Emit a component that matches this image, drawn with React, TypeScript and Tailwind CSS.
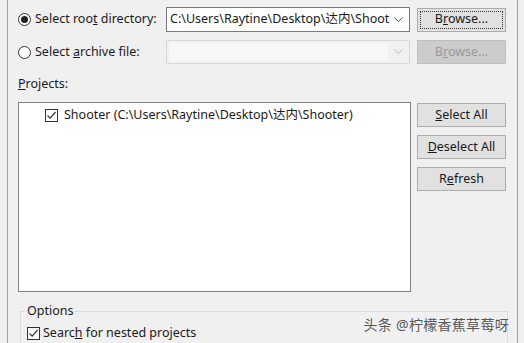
import React from 'react';

const font = { fontFamily: '"Noto Sans", "Noto Sans CJK SC", sans-serif' };

const Radio = ({ checked }: { checked?: boolean }) => (
  <span className="w-[13px] h-[13px] rounded-full border border-[#333] bg-white flex items-center justify-center shrink-0">
    {checked && <span className="w-[7px] h-[7px] rounded-full bg-[#222]" />}
  </span>
);

const Check = () => (
  <span className="w-[13px] h-[13px] border border-[#333] bg-white flex items-center justify-center shrink-0">
    <svg width="11" height="11" viewBox="0 0 11 11">
      <path d="M1.5 5.5 L4.2 8.2 L9.5 2" fill="none" stroke="#333" strokeWidth="1.2" />
    </svg>
  </span>
);

const Chevron = ({ color }: { color: string }) => (
  <svg width="9" height="6" viewBox="0 0 9 6">
    <path d="M0.5 0.5 L4.5 4.5 L8.5 0.5" fill="none" stroke={color} strokeWidth="1" />
  </svg>
);

const Btn = ({ children, focused, disabled }: { children: React.ReactNode; focused?: boolean; disabled?: boolean }) => (
  <div
    className={
      'w-[89px] h-[24px] flex items-center justify-center border ' +
      (disabled ? 'bg-[#cccccc] border-[#bfbfbf] text-[#9a9a9a]' : 'bg-[#e1e1e1] border-[#adadad] text-[#1a1a1a]')
    }
  >
    {focused ? (
      <div className="w-[83px] h-[18px] border border-dotted border-[#333] flex items-center justify-center">{children}</div>
    ) : (
      children
    )}
  </div>
);

export default function App() {
  return (
    <div className="w-[524px] h-[343px] overflow-hidden bg-[#f0f0f0] pl-[7px] text-[12.5px] text-[#1a1a1a]" style={font}>
      <div className="w-[511px] h-full border-x border-[#a0a0a0] pl-[10px] pt-[7px]">
        {/* root directory row */}
        <div className="flex items-center h-[25px]">
          <div className="w-[148px] flex items-center gap-[4px]">
            <Radio checked />
            <span className="whitespace-nowrap">Select roo<u>t</u> directory:</span>
          </div>
          <div className="w-[244px] h-[25px] border border-[#7a7a7a] bg-white flex items-center pl-[3px] pr-[6px]">
            <span className="flex-1 overflow-hidden whitespace-nowrap">C:\Users\Raytine\Desktop\达内\Shooter</span>
            <span className="pl-[4px]"><Chevron color="#555" /></span>
          </div>
          <div className="ml-[7px]">
            <Btn focused>
              <span>B<u>r</u>owse...</span>
            </Btn>
          </div>
        </div>
        {/* archive row */}
        <div className="flex items-center h-[24px] mt-[8px]">
          <div className="w-[148px] flex items-center gap-[4px]">
            <Radio />
            <span className="whitespace-nowrap">Select <u>a</u>rchive file:</span>
          </div>
          <div className="w-[244px] h-[24px] border border-[#d9d9d9] bg-[#f0f0f0] flex items-center p-[2px] pr-[6px]">
            <span className="flex-1 h-full bg-[#f7f7f7]" />
            <span className="pl-[6px]"><Chevron color="#b5b5b5" /></span>
          </div>
          <div className="ml-[7px]">
            <Btn disabled>
              <span>B<u>r</u>owse...</span>
            </Btn>
          </div>
        </div>
        <div className="mt-[12px] h-[16px] leading-[16px]">
          <u>P</u>rojects:
        </div>
        <div className="flex mt-[10px]">
          <div className="w-[393px] h-[190px] border border-[#828282] bg-white pl-[26px] pt-[4px]">
            <div className="flex items-center gap-[6px] h-[16px]">
              <Check />
              <span className="whitespace-nowrap">Shooter (C:\Users\Raytine\Desktop\达内\Shooter)</span>
            </div>
          </div>
          <div className="ml-[6px] mt-[1px] flex flex-col gap-[8px]">
            <Btn>
              <span><u>S</u>elect All</span>
            </Btn>
            <Btn>
              <span><u>D</u>eselect All</span>
            </Btn>
            <Btn>
              <span>R<u>e</u>fresh</span>
            </Btn>
          </div>
        </div>
        <div className="relative ml-[2px] mt-[19px] w-[488px] h-[60px] border border-[#dcdcdc]">
          <span className="absolute -top-[9px] left-[4px] px-[2px] bg-[#f0f0f0] leading-[16px]">Options</span>
          <div className="flex items-center gap-[3px] pl-[6px] pt-[12px]">
            <Check />
            <span>Searc<u>h</u> for nested projects</span>
          </div>
          <span className="absolute right-[-2px] top-[2px] text-[14px] text-[#555] tracking-[0.3px]" style={{ textShadow: '0 0 1px #fff' }}>
            头条 @柠檬香蕉草莓呀
          </span>
        </div>
      </div>
    </div>
  );
}
